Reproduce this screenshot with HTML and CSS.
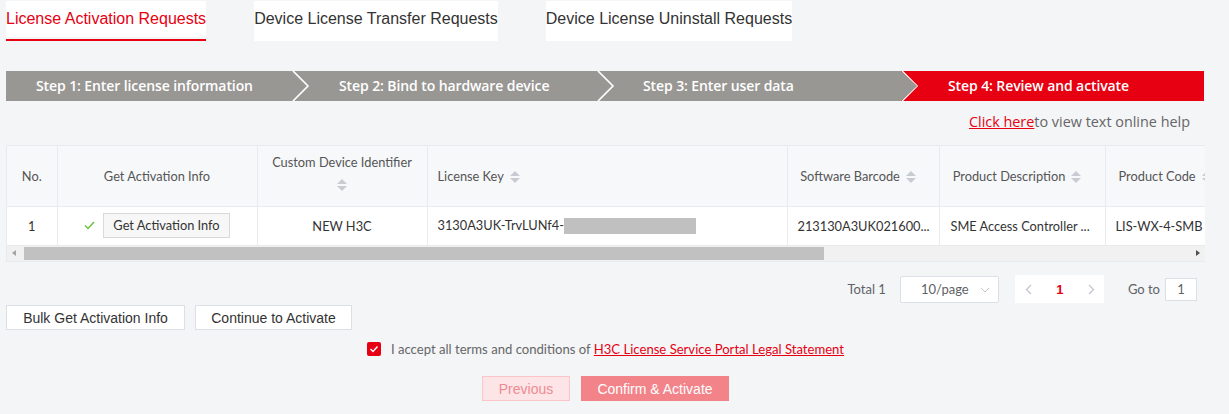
FILE: index.html
```html
<!DOCTYPE html>
<html>
<head>
<meta charset="utf-8">
<link rel="stylesheet" href="styles.css">
</head>
<body>
<div class="page">
  <div class="tabs">
    <div class="tab active">License Activation Requests</div>
    <div class="tab">Device License Transfer Requests</div>
    <div class="tab">Device License Uninstall Requests</div>
  </div>

  <div class="steps">
    <div class="step s1">Step 1: Enter license information</div>
    <div class="step s2">
      <svg class="chev" width="20" height="30" viewBox="0 0 20 30"><polyline points="1,0 16,15 1,30" fill="none" stroke="#fff" stroke-width="1.6"/></svg>
      Step 2: Bind to hardware device</div>
    <div class="step s3">
      <svg class="chev" width="20" height="30" viewBox="0 0 20 30"><polyline points="1,0 16,15 1,30" fill="none" stroke="#fff" stroke-width="1.6"/></svg>
      Step 3: Enter user data</div>
    <div class="step current">
      <svg class="chev" width="20" height="30" viewBox="0 0 20 30"><polyline points="1,0 16,15 1,30" fill="none" stroke="#fff" stroke-width="1.6"/></svg>
      Step 4: Review and activate</div>
  </div>

  <div class="help"><a class="help-link">Click here</a>to view text online help</div>

  <div class="table-wrap">
    <div class="table-clip">
      <table class="grid">
        <colgroup>
          <col style="width:50px"><col style="width:200px"><col style="width:170px"><col style="width:360px"><col style="width:152px"><col style="width:166px"><col style="width:130px">
        </colgroup>
        <thead>
          <tr>
            <th class="c">No.</th>
            <th class="c">Get Activation Info</th>
            <th class="c"><div class="stack">Custom Device Identifier<span class="sort"></span></div></th>
            <th class="l">License Key<span class="sort inline"></span></th>
            <th class="c shift">Software Barcode<span class="sort inline"></span></th>
            <th class="c shift">Product Description<span class="sort inline"></span></th>
            <th class="l pc">Product Code<span class="sort inline"></span></th>
          </tr>
        </thead>
        <tbody>
          <tr>
            <td class="c">1</td>
            <td class="c"><span class="ok"><svg width="11" height="9" viewBox="0 0 11 9"><polyline points="1,4.5 4,7.5 10,1" fill="none" stroke="#67c23a" stroke-width="1.4"/></svg></span><span class="mini-btn">Get Activation Info</span></td>
            <td class="c">NEW H3C</td>
            <td class="l">3130A3UK-TrvLUNf4-<span class="mask"></span></td>
            <td class="l bc">213130A3UK021600...</td>
            <td class="l pd">SME Access Controller ...</td>
            <td class="l pc2">LIS-WX-4-SMB</td>
          </tr>
        </tbody>
      </table>
    </div>
    <div class="hscroll">
      <span class="arr left"></span>
      <div class="thumb"></div>
      <span class="arr right"></span>
    </div>
  </div>

  <div class="pager-row">
    <span class="total">Total 1</span>
    <div class="size-select">10/page<svg class="caret" width="10" height="6" viewBox="0 0 10 6"><polyline points="1,1 5,5 9,1" fill="none" stroke="#c0c4cc" stroke-width="1"/></svg></div>
    <div class="pager">
      <svg width="7" height="11" viewBox="0 0 7 11"><polyline points="6,1 1.5,5.5 6,10" fill="none" stroke="#c0c4cc" stroke-width="1.3"/></svg>
      <span class="num">1</span>
      <svg width="7" height="11" viewBox="0 0 7 11"><polyline points="1,1 5.5,5.5 1,10" fill="none" stroke="#c0c4cc" stroke-width="1.3"/></svg>
    </div>
    <span class="goto">Go to</span>
    <div class="goto-input">1</div>
  </div>

  <div class="actions">
    <button class="btn">Bulk Get Activation Info</button>
    <button class="btn">Continue to Activate</button>
  </div>

  <div class="agree">
    <span class="checkbox"><svg width="10" height="8" viewBox="0 0 10 8"><polyline points="1.5,4 4,6.5 8.5,1.5" fill="none" stroke="#fff" stroke-width="1.4"/></svg></span>
    <span class="agree-text">I accept all terms and conditions of <a class="legal">H3C License Service Portal Legal Statement</a></span>
  </div>

  <div class="footer-btns">
    <button class="prev">Previous</button>
    <button class="confirm">Confirm &amp; Activate</button>
  </div>
</div>
</body>
</html>
```

FILE: styles.css
```css
* { box-sizing: border-box; }
html, body { margin: 0; padding: 0; }
body {
  background: #f4f5f7;
  font-family: "Liberation Sans", Arial, sans-serif;
  color: #333;
}
.page {
  width: 1199px;
  margin-left: 6px;
}

/* tabs */
.tabs {
  display: flex;
  gap: 48px;
  padding-top: 1px;
}
.tab {
  background: #fff;
  height: 40px;
  padding-bottom: 2px;
  font-size: 16px;
  line-height: 36px;
  color: #333;
  border-bottom: 2px solid transparent;
  white-space: nowrap;
}
.tab.active {
  color: #e60012;
  border-bottom-color: #e60012;
  background-clip: content-box;
}

/* steps */
.steps {
  margin-top: 30px;
  display: flex;
  height: 30px;
  background: #999794;
  width: 1198px;
}
.step {
  position: relative;
  flex: none;
  color: #fff;
  font-family: "Open Sans", "Noto Sans", sans-serif;
  font-size: 14px;
  font-weight: 600;
  letter-spacing: -0.1px;
  line-height: 30px;
  white-space: nowrap;
}
.s1 { width: 295px; padding-left: 30px; }
.s2 { width: 305px; padding-left: 38px; }
.s3 { width: 304px; padding-left: 37px; }
.chev {
  position: absolute;
  left: -9px;
  top: 0;
}
.step.current {
  flex: 1;
  background: #e60012;
  margin-left: -9px;
  padding-left: 47px;
  clip-path: polygon(0 0, 100% 0, 100% 100%, 0 100%, 16px 50%);
}
.step.current .chev { left: 0; }

/* help */
.help {
  text-align: right;
  padding-right: 15px;
  margin-top: 10px;
  height: 22px;
  font-family: "Open Sans", "Noto Sans", sans-serif;
  font-size: 14.4px;
  line-height: 22px;
  color: #666;
}
.help-link {
  color: #e60012;
  text-decoration: underline;
}

/* table */
.table-wrap {
  margin-top: 12px;
  width: 1199px;
  background: #fff;
  border: 1px solid #e8eaef;
  border-right: none;
}
.table-clip {
  overflow: hidden;
  width: 1198px;
}
.grid {
  border-collapse: collapse;
  table-layout: fixed;
  width: 1228px;
  font-family: "Lato", "Open Sans", sans-serif;
  font-size: 12.8px;
  color: #555;
}
.grid th, .grid td {
  border-left: 1px solid #e8eaef;
  white-space: nowrap;
  overflow: hidden;
  padding: 0 10px;
}
.grid th:first-child, .grid td:first-child { border-left: none; }
.grid th {
  height: 60px;
  background: #f7f8fa;
  font-weight: normal;
  color: #555;
  border-bottom: 1px solid #e8eaef;
}
.grid td {
  height: 39px;
  color: #333;
}
.grid .c { text-align: center; }
.grid .l { text-align: left; }
.grid th.shift { padding-right: 20px; }
.grid .bc { padding-left: 10px; }
.grid .pd { padding-left: 11px; }
.grid .pc { padding-left: 13px; }
.grid .pc2 { padding-left: 10px; }
.stack {
  display: flex;
  flex-direction: column;
  align-items: center;
  gap: 9px;
  margin-top: -6px;
}
.sort {
  display: inline-block;
  position: relative;
  width: 10px;
  height: 12px;
}
.sort::before, .sort::after {
  content: "";
  position: absolute;
  left: 0;
  border-left: 5px solid transparent;
  border-right: 5px solid transparent;
}
.sort::before { top: 0; border-bottom: 5px solid #c8cbd2; }
.sort::after { bottom: 0; border-top: 5px solid #c8cbd2; }
.sort.inline {
  margin-left: 6px;
  vertical-align: -2px;
}
.ok {
  display: inline-block;
  margin-right: 8px;
}
.mini-btn {
  display: inline-block;
  border: 1px solid #d9d9d9;
  background: #f7f7f7;
  height: 25px;
  line-height: 23px;
  padding: 0 9px;
  color: #333;
}
.mask {
  display: inline-block;
  width: 132px;
  height: 16px;
  background: #c0c0c0;
  vertical-align: -4px;
}
.hscroll {
  position: relative;
  height: 16px;
  background: #f1f1f1;
  border-top: 1px solid #eaeaea;
  width: 1198px;
}
.thumb {
  position: absolute;
  left: 17px;
  top: 1px;
  width: 800px;
  height: 13px;
  background: #c1c1c1;
}
.arr {
  position: absolute;
  top: 4px;
  border-top: 3px solid transparent;
  border-bottom: 3px solid transparent;
}
.arr.left { left: 5px; border-right: 4px solid #a3a3a3; }
.arr.right { right: 5px; border-left: 4px solid #505050; }

/* pager */
.pager-row {
  display: flex;
  justify-content: flex-end;
  align-items: center;
  margin-top: 12px;
  padding-right: 8px;
  height: 30px;
  font-family: "Lato", "Open Sans", sans-serif;
  font-size: 13px;
  color: #606266;
}
.total { margin-right: 14px; }
.size-select {
  position: relative;
  width: 99px;
  height: 27px;
  background: #fff;
  border: 1px solid #dcdfe6;
  border-radius: 2px;
  line-height: 25px;
  padding-left: 20px;
}
.caret { position: absolute; right: 8px; top: 10px; }
.pager {
  display: flex;
  align-items: center;
  justify-content: space-between;
  width: 89px;
  height: 28px;
  background: #fff;
  margin-left: 16px;
  padding: 0 9px 0 10px;
}
.num {
  color: #e60012;
  font-weight: bold;
  font-family: "Liberation Sans", Arial, sans-serif;
}
.goto { margin-left: 24px; margin-right: 5px; }
.goto-input {
  width: 32px;
  height: 23px;
  background: #fff;
  border: 1px solid #dcdfe6;
  text-align: center;
  line-height: 21px;
  color: #606266;
}

/* action buttons */
.actions {
  display: flex;
  gap: 10px;
  margin-top: 1px;
}
.btn {
  height: 25px;
  background: #fff;
  border: 1px solid #dcdfe6;
  font-family: "Liberation Sans", Arial, sans-serif;
  font-size: 14px;
  color: #333;
  padding: 0;
  margin: 0;
}
.btn:first-child { width: 179px; }
.btn:last-child { width: 157px; }

/* agreement */
.agree {
  display: flex;
  justify-content: center;
  align-items: center;
  margin-top: 11px;
  height: 16px;
  font-family: "Lato", "Open Sans", sans-serif;
  font-size: 13.1px;
  color: #666;
}
.checkbox {
  width: 14px;
  height: 14px;
  background: #e60012;
  border-radius: 2px;
  display: flex;
  align-items: center;
  justify-content: center;
  margin-right: 10px;
}
.legal {
  color: #e60012;
  text-decoration: underline;
}

/* footer buttons */
.footer-btns {
  display: flex;
  justify-content: center;
  gap: 11px;
  margin-top: 19px;
}
.prev, .confirm {
  height: 25px;
  font-family: "Liberation Sans", Arial, sans-serif;
  font-size: 14px;
  margin: 0;
  padding: 0;
}
.prev {
  width: 88px;
  background: #fde5e7;
  border: 1px solid #fbc5c9;
  color: #f08a92;
}
.confirm {
  width: 148px;
  background: #f28389;
  border: none;
  color: #fff;
}
```
